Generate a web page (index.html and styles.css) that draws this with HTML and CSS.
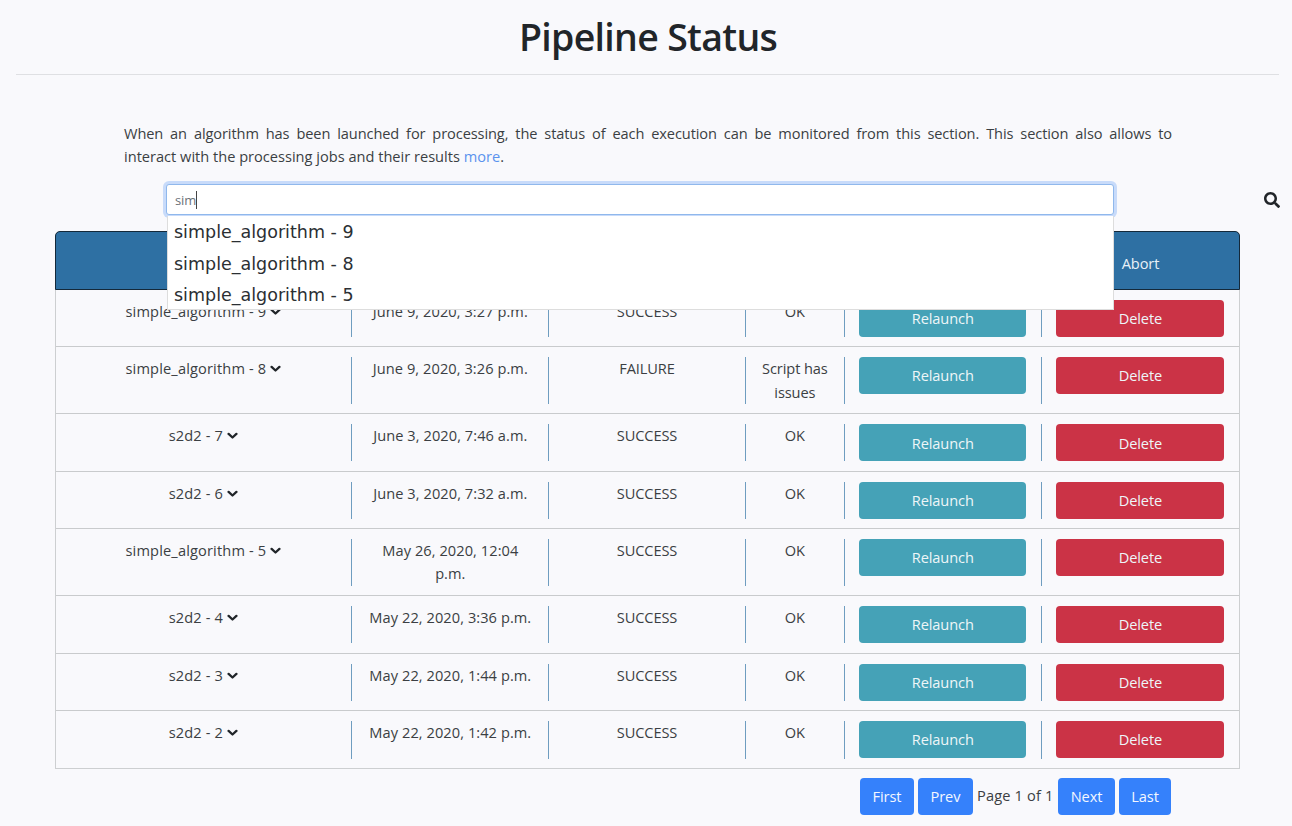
FILE: index.html
```html
<!DOCTYPE html>
<html lang="en">
<head>
<meta charset="utf-8">
<title>Pipeline Status</title>
<link rel="stylesheet" href="styles.css">
</head>
<body>
<svg class="defs" width="0" height="0">
  <symbol id="chevron" viewBox="0 0 11 8"><path d="M1.600 1.900L5.500 5.500L9.400 1.900" fill="none" stroke="#212529" stroke-width="2.300" stroke-linecap="round" stroke-linejoin="round"/></symbol>
</svg>
<header class="page-head"><h1>Pipeline Status</h1></header>
<p class="intro"><span class="line">When an algorithm has been launched for processing, the status of each execution can be monitored from this section. This section also allows to</span><span class="line last">interact with the processing jobs and their results <a href="#">more</a>.</span></p>
<div class="search">
  <div class="field">
    <div class="input"><span>sim</span><i class="caret"></i></div>
    <ul class="menu"><li>simple_algorithm - 9</li><li>simple_algorithm - 8</li><li>simple_algorithm - 5</li></ul>
  </div>
  <svg class="glass" viewBox="0 0 512 512"><path d="M505 442.700L405.300 343c-4.500-4.500-10.600-7-17-7H372c27.600-35.300 44-79.700 44-128C416 93.100 322.900 0 208 0S0 93.100 0 208s93.100 208 208 208c48.300 0 92.700-16.400 128-44v16.300c0 6.400 2.500 12.500 7 17l99.700 99.700c9.400 9.400 24.600 9.400 33.900 0l28.300-28.300c9.400-9.400 9.400-24.600.100-34zM208 336c-70.700 0-128-57.200-128-128 0-70.700 57.200-128 128-128 70.700 0 128 57.200 128 128 0 70.700-57.200 128-128 128z"/></svg>
</div>
<main class="table">
  <div class="thead"><div class="abort">Abort</div></div>
  <div class="row"><div><span class="name">simple_algorithm - 9</span><svg class="chev"><use href="#chevron"/></svg></div><div class="date">June 9, 2020, 3:27 p.m.</div><div class="state">SUCCESS</div><div>OK</div><div><button class="btn teal">Relaunch</button></div><div><button class="btn red">Delete</button></div></div>
  <div class="row tall"><div><span class="name">simple_algorithm - 8</span><svg class="chev"><use href="#chevron"/></svg></div><div class="date">June 9, 2020, 3:26 p.m.</div><div class="state">FAILURE</div><div>Script has<br>issues</div><div><button class="btn teal">Relaunch</button></div><div><button class="btn red">Delete</button></div></div>
  <div class="row"><div><span class="name">s2d2 - 7</span><svg class="chev"><use href="#chevron"/></svg></div><div class="date">June 3, 2020, 7:46 a.m.</div><div class="state">SUCCESS</div><div>OK</div><div><button class="btn teal">Relaunch</button></div><div><button class="btn red">Delete</button></div></div>
  <div class="row"><div><span class="name">s2d2 - 6</span><svg class="chev"><use href="#chevron"/></svg></div><div class="date">June 3, 2020, 7:32 a.m.</div><div class="state">SUCCESS</div><div>OK</div><div><button class="btn teal">Relaunch</button></div><div><button class="btn red">Delete</button></div></div>
  <div class="row tall"><div><span class="name">simple_algorithm - 5</span><svg class="chev"><use href="#chevron"/></svg></div><div class="date">May 26, 2020, 12:04<br>p.m.</div><div class="state">SUCCESS</div><div>OK</div><div><button class="btn teal">Relaunch</button></div><div><button class="btn red">Delete</button></div></div>
  <div class="row"><div><span class="name">s2d2 - 4</span><svg class="chev"><use href="#chevron"/></svg></div><div class="date">May 22, 2020, 3:36 p.m.</div><div class="state">SUCCESS</div><div>OK</div><div><button class="btn teal">Relaunch</button></div><div><button class="btn red">Delete</button></div></div>
  <div class="row"><div><span class="name">s2d2 - 3</span><svg class="chev"><use href="#chevron"/></svg></div><div class="date">May 22, 2020, 1:44 p.m.</div><div class="state">SUCCESS</div><div>OK</div><div><button class="btn teal">Relaunch</button></div><div><button class="btn red">Delete</button></div></div>
  <div class="row"><div><span class="name">s2d2 - 2</span><svg class="chev"><use href="#chevron"/></svg></div><div class="date">May 22, 2020, 1:42 p.m.</div><div class="state">SUCCESS</div><div>OK</div><div><button class="btn teal">Relaunch</button></div><div><button class="btn red">Delete</button></div></div>
</main>
<nav class="pager"><button class="btn blue first">First</button><button class="btn blue prev">Prev</button><span class="page">Page 1 of 1</span><button class="btn blue next">Next</button><button class="btn blue final">Last</button></nav>
</body>
</html>
```
FILE: styles.css
```css
* { box-sizing: border-box; }
body {
  margin: 0;
  height: 826px;
  overflow: hidden;
  background: #f9f9fc;
  color: #3b3f43;
  font: 14.6px/23.4px "Open Sans", "Noto Sans", sans-serif;
  letter-spacing: -0.1px;
}
.defs { display: block; height: 0; }
.page-head {
  height: 75px;
  margin: 0 13px 0 16px;
  padding: 13px 0 0 1px;
  border-bottom: 1px solid #dfe0e3;
  text-align: center;
}
h1 {
  margin: 0;
  font-size: 37.5px;
  line-height: 47px;
  font-weight: 600;
  letter-spacing: -0.7px;
  color: #212529;
}
.intro { width: 1048px; margin: 47px 0 0 124px; }
.line { display: block; text-align: justify; text-align-last: justify; white-space: nowrap; }
.line.last { text-align-last: left; letter-spacing: 0; }
.intro a { color: #5b93ee; text-decoration: none; }
.search { display: flex; margin: 15px 12px 0 166px; height: 47px; }
.field { position: relative; width: 948px; }
.input {
  display: flex;
  align-items: center;
  height: 31px;
  padding: 2px 0 0 8px;
  border: 1px solid #90b8ec;
  border-radius: 3px;
  background: #fff;
  box-shadow: 0 0 0 3px #c8dbfa;
  color: #6b7178;
  font-size: 13px;
}
.caret { width: 1px; height: 18px; background: #444; }
.menu {
  position: absolute;
  left: 1px;
  top: 32px;
  width: 947px;
  height: 94px;
  margin: 0;
  padding: 1.6px 0 0 6px;
  list-style: none;
  background: #fff;
  border: 1px solid #ddd;
  border-top: 0;
  color: #2b2f33;
  font: 17.5px/31.2px "DejaVu Sans", sans-serif;
  letter-spacing: 0;
}
.glass { width: 16px; height: 16px; margin: 8px 0 0 auto; fill: #212529; }
.table { width: 1185px; margin-left: 55px; border: 1px solid #cdcfd1; border-top: 0; border-radius: 5px 5px 0 0; }
.thead {
  display: flex;
  justify-content: flex-end;
  height: 59px;
  margin: 0 -1px;
  border: 1px solid #14293a;
  border-radius: 5px 5px 0 0;
  background: #2e70a3;
  color: #e8f0f7;
}
.abort { width: 197px; padding-top: 20px; text-align: center; }
.row {
  display: grid;
  grid-template-columns: 3fr 2fr 2fr 1fr 2fr 2fr;
  height: 57.34px;
  padding: 10px 0 9.4px;
  border-bottom: 1px solid #c9cbcd;
  text-align: center;
}
.row.tall { height: 67.2px; }
.row:last-child { border-bottom: 0; }
.row > div { border-right: 1px solid #6f9dc0; }
.row > div:last-child { border-right: 0; }
.row > div:nth-child(n+5) { padding: 0 14.6px; }
.name { letter-spacing: 0.15px; }
.row .date { padding-left: 1px; letter-spacing: 0.07px; }
.chev { width: 11px; height: 8px; margin-left: 4px; vertical-align: 1px; }
.btn {
  display: block;
  width: 100%;
  height: 37px;
  padding: 1px 0 0;
  border: 0;
  border-radius: 4px;
  color: #eef6f8;
  font: inherit;
  letter-spacing: inherit;
}
.teal { background: #45a2b7; }
.red { background: #cb3346; }
.blue { background: #3581fb; color: #f3f7ff; }
.pager { display: flex; margin: 9px 0 0 860px; }
.first { width: 54px; margin-right: 4px; }
.prev { width: 55px; margin-right: 4px; }
.page { width: 77px; padding-top: 6px; white-space: nowrap; letter-spacing: 0.15px; }
.next { width: 57px; margin: 0 4px; }
.final { width: 52px; }
```
